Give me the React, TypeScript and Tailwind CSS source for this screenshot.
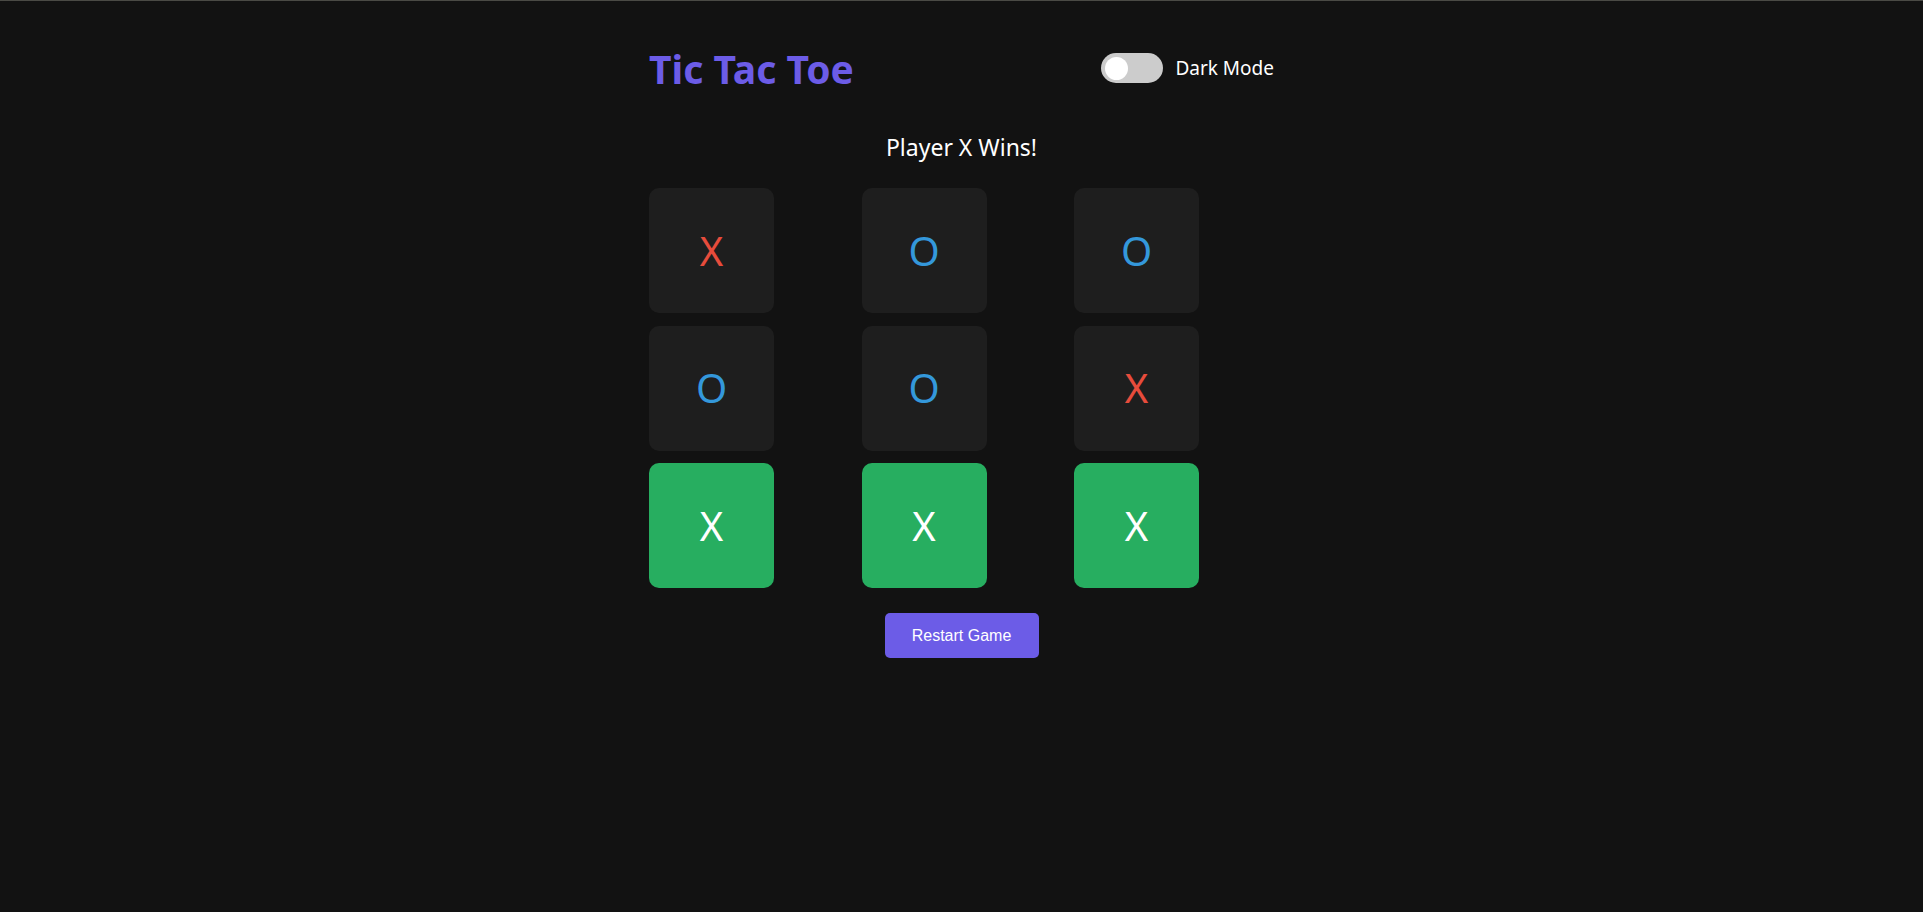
import { useState } from "react";

type Mark = "X" | "O";

const board: Mark[] = ["X", "O", "O", "O", "O", "X", "X", "X", "X"];
const winLine = [6, 7, 8];

function Cell({ value, win }: { value: Mark; win: boolean }) {
  const color = win ? "text-white" : value === "X" ? "text-[#e74c3c]" : "text-[#3498db]";
  return (
    <button
      className={`flex h-[125px] w-[125px] items-center justify-center rounded-[10px] text-[40px] leading-none ${
        win ? "bg-[#27ae60]" : "bg-[#1e1e1e]"
      } ${color}`}
    >
      {value}
    </button>
  );
}

export default function App() {
  const [dark, setDark] = useState(false);
  const rows = [0, 1, 2];

  return (
    <div className="min-h-screen border-t border-[#4a4a45] bg-[#121212] font-['Noto_Sans','Open_Sans',sans-serif] text-white">
      <div className="mx-auto w-[625px] pt-[47px]">
        <header className="flex h-[40px] items-center justify-between">
          <h1 className="text-[39px] font-bold leading-none text-[#6c5ce7]">Tic Tac Toe</h1>
          <div className="flex items-center gap-[12px]">
            <button
              onClick={() => setDark(!dark)}
              className="flex h-[30px] w-[62px] items-center rounded-full bg-[#cccccc] px-[4px]"
            >
              <span className="h-[23px] w-[23px] rounded-full bg-white" />
            </button>
            <span className="text-[19px] leading-none">Dark Mode</span>
          </div>
        </header>

        <p className="mt-[48px] text-center text-[23px] leading-none">Player X Wins!</p>

        <div className="mt-[29px] flex w-[550px] flex-col gap-[12.5px]">
          {rows.map((r) => (
            <div key={r} className="flex justify-between">
              {[0, 1, 2].map((c) => {
                const i = r * 3 + c;
                return <Cell key={i} value={board[i]} win={winLine.includes(i)} />;
              })}
            </div>
          ))}
        </div>

        <div className="mt-[25px] flex justify-center">
          <button className="h-[45px] w-[154px] rounded-[5px] bg-[#6c5ce7] font-['Liberation_Sans',Arial,sans-serif] text-[16px] text-white">
            Restart Game
          </button>
        </div>
      </div>
    </div>
  );
}
